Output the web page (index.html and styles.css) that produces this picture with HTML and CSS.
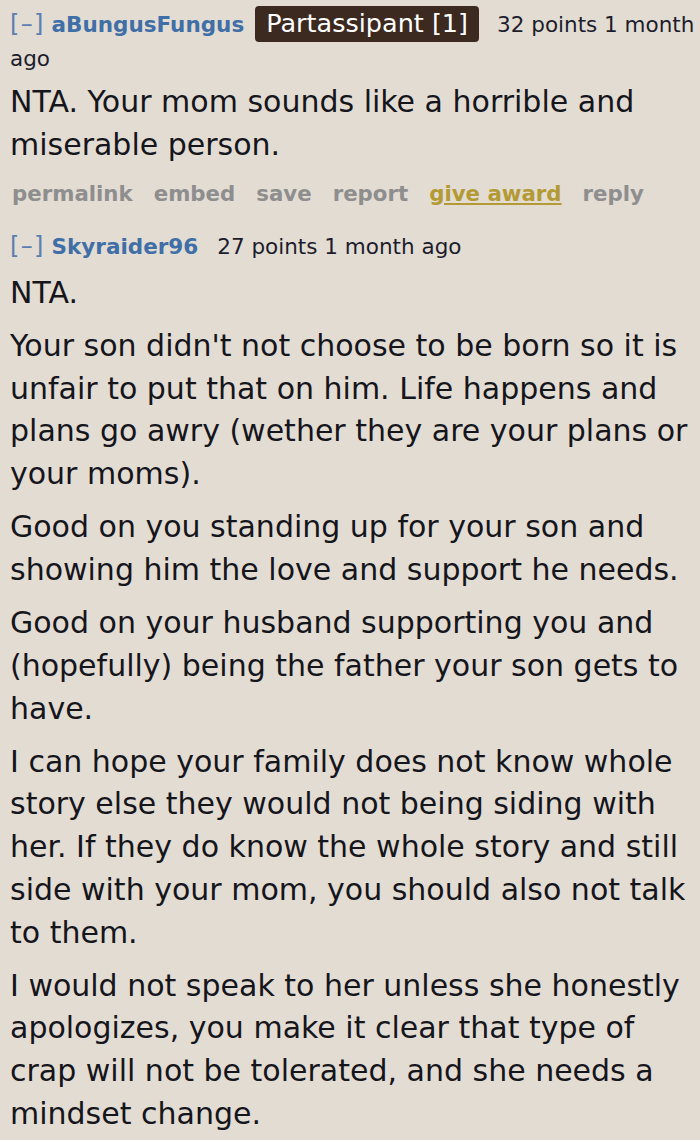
FILE: index.html
```html
<!DOCTYPE html>
<html>
<head>
<meta charset="utf-8">
<link rel="stylesheet" href="styles.css">
</head>
<body>
<div class="comment">
  <p class="tagline"><span class="expand">[–]</span> <span class="author">aBungusFungus</span><span class="flair">Partassipant [1]</span><span class="score">32 points 1 month ago</span></p>
  <div class="md">
    <p>NTA. Your mom sounds like a horrible and miserable person.</p>
  </div>
  <ul class="buttons">
    <li>permalink</li>
    <li>embed</li>
    <li>save</li>
    <li>report</li>
    <li class="award">give award</li>
    <li>reply</li>
  </ul>
</div>
<div class="comment">
  <p class="tagline"><span class="expand">[–]</span> <span class="author">Skyraider96</span><span class="score">27 points 1 month ago</span></p>
  <div class="md second">
    <p>NTA.</p>
    <p>Your son didn't not choose to be born so it is unfair to put that on him. Life happens and plans go awry (wether they are your plans or your moms).</p>
    <p>Good on you standing up for your son and showing him the love and support he needs.</p>
    <p>Good on your husband supporting you and (hopefully) being the father your son gets to have.</p>
    <p>I can hope your family does not know whole story else they would not being siding with her. If they do know the whole story and still side with your mom, you should also not talk to them.</p>
    <p>I would not speak to her unless she honestly apologizes, you make it clear that type of crap will not be tolerated, and she needs a mindset change.</p>
  </div>
</div>
</body>
</html>
```

FILE: styles.css
```css
html, body {
  margin: 0;
  padding: 0;
  background: #e3dcd3;
}
body {
  font-family: "DejaVu Sans", Verdana, sans-serif;
  color: #15151c;
  padding: 6px 4px 0 10px;
}
.tagline {
  margin: 0;
  font-size: 21.5px;
  line-height: 33px;
  color: #1c1c2c;
}
.expand {
  color: #5a7fb0;
  font-size: 24px;
  letter-spacing: 1.3px;
}
.author {
  color: #3f6fa6;
  font-weight: bold;
}
.flair {
  display: inline-block;
  background: #3c2a20;
  color: #ffffff;
  font-size: 25.5px;
  line-height: 33px;
  padding: 1px 11px 2px;
  border-radius: 4px;
  margin: 0 18px 0 11px;
}
.score {
  margin-left: 19px;
}
.flair + .score {
  margin-left: 0;
}
.md {
  margin-top: 6px;
}
.md.second {
  margin-top: 9px;
}
.md p {
  margin: 0 0 10.2px 0;
  font-size: 30px;
  line-height: 42.8px;
}
.buttons {
  list-style: none;
  margin: 0 0 19px 2px;
  padding: 0;
  display: flex;
  gap: 21px;
  font-size: 21.3px;
  font-weight: bold;
  line-height: 34px;
  color: #8e8e8e;
}
.buttons .award {
  color: #b39a35;
  text-decoration: underline;
}
```
